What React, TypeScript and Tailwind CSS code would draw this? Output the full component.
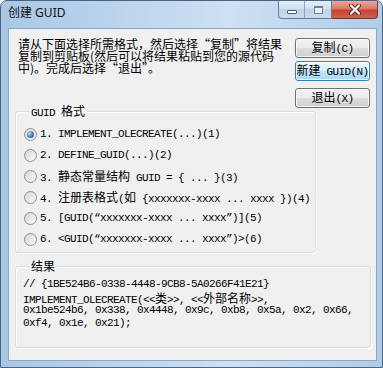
import type { ReactNode } from "react";

const CJK_ONLY = /([\u3000-\u9fff\uff00-\uffef]+)/;

// mixed line: ascii in a mono face, chinese runs at 12px
function T({ s }: { s: string }) {
  const parts = s.split(CJK_ONLY);
  return (
    <span className="whitespace-pre">
      {parts.map((p, i) =>
        i % 2 ? (
          <span key={i} className="text-[12px] tracking-normal font-['Noto_Sans_CJK_SC',sans-serif]">
            {p}
          </span>
        ) : (
          <span key={i}>{p}</span>
        )
      )}
    </span>
  );
}

function Btn({ children, def = false }: { children: ReactNode; def?: boolean }) {
  return (
    <div
      className={`h-[20px] w-[75px] rounded-[3px] border flex items-center justify-center whitespace-nowrap shadow-[inset_0_0_0_1px_rgba(255,255,255,0.75)] ${
        def
          ? "border-[#3c7fb1] bg-[linear-gradient(#eaf6fd,#d9f0fc_50%,#bee6fd_50%,#a7d9f5)]"
          : "border-[#707070] bg-[linear-gradient(#f2f2f2,#ebebeb_50%,#dddddd_50%,#cfcfcf)]"
      }`}
    >
      {children}
    </div>
  );
}

function Radio({ n, label, sel = false }: { n: number; label: string; sel?: boolean }) {
  return (
    <div className="h-[21px] flex items-center">
      <span className="w-[13px] h-[13px] rounded-full border border-[#8e8f8f] bg-[linear-gradient(135deg,#d4d4d4,#fbfbfb)] flex items-center justify-center shrink-0">
        {sel && (
          <span className="w-[7px] h-[7px] rounded-full bg-[radial-gradient(circle_at_35%_35%,#b9daf7,#2c6bb0_65%,#1d4f86)]" />
        )}
      </span>
      <span className="ml-[3px] whitespace-nowrap">
        <T s={`${n}. ${label}`} />
      </span>
    </div>
  );
}

const OPTIONS = [
  "IMPLEMENT_OLECREATE(...)(1)",
  "DEFINE_GUID(...)(2)",
  "静态常量结构 GUID = { ... }(3)",
  "注册表格式(如 {xxxxxxx-xxxx ... xxxx })(4)",
  "[GUID(“xxxxxxx-xxxx ... xxxx”)](5)",
  "<GUID(“xxxxxxx-xxxx ... xxxx”)>(6)",
];

const CODE = [
  "// {1BE524B6-0338-4448-9CB8-5A0266F41E21}",
  "IMPLEMENT_OLECREATE(<<类>>, <<外部名称>>,",
  "0x1be524b6, 0x338, 0x4448, 0x9c, 0xb8, 0x5a, 0x2, 0x66,",
  "0xf4, 0x1e, 0x21);",
];

export default function App() {
  return (
    <div className="w-[383px] h-[368px] flex flex-col border border-[#4a6482] rounded-t-[7px] overflow-hidden bg-[linear-gradient(90deg,#a9c7e5,#c4daf0_45%,#cfe1f3_60%,#b0cce8)] text-black font-['Liberation_Mono','Noto_Sans_CJK_SC',monospace] text-[11px] tracking-[-0.6px]">
      {/* title bar */}
      <div className="h-[27px] flex items-start shrink-0">
        <div className="pl-[7px] pt-[5px] text-[12px] tracking-normal leading-[14px] font-['Noto_Sans','Noto_Sans_CJK_SC',sans-serif] text-[#111]">
          创建 GUID
        </div>
        <div className="ml-auto mr-[4px] flex">
          <div className="flex h-[18px] border border-t-0 border-[#6a7c93] rounded-bl-[4px] overflow-hidden bg-[linear-gradient(#e4eef9,#cfdff0_50%,#bcd2ea_50%,#c9dcf0)]">
            <div className="w-[26px] flex items-center justify-center border-r border-[#8ea2ba]">
              <div className="w-[10px] h-[4px] mt-[5px] bg-white border border-[#4c5d73] rounded-[1px]" />
            </div>
            <div className="w-[26px] flex items-center justify-center">
              <div className="w-[9px] h-[8px] border border-[#6f819a] border-t-2 bg-[#e9f1fa]" />
            </div>
          </div>
          <div className="w-[46px] h-[18px] border border-t-0 border-l-0 border-[#6a3a35] rounded-br-[4px] bg-[linear-gradient(#eaa899,#d97a69_45%,#c8402e_55%,#d2624f)] flex items-center justify-center">
            <svg width="14" height="11" viewBox="0 0 14 11">
              <path d="M3 1.5 L11 9.5 M11 1.5 L3 9.5" stroke="#5a2a25" strokeWidth="4" strokeLinecap="round" />
              <path d="M3 1.5 L11 9.5 M11 1.5 L3 9.5" stroke="#fff" strokeWidth="2.2" strokeLinecap="round" />
            </svg>
          </div>
        </div>
      </div>

      {/* client area */}
      <div className="flex-1 ml-[7px] mr-[5px] mb-[6px] border border-[#8da7c2] bg-[#f0f0f0] pt-[9px] px-[6px] flex flex-col">
        <div className="h-[67px] flex">
          <div className="pl-[3px] text-[12px] tracking-normal font-['Noto_Sans_CJK_SC',sans-serif] whitespace-nowrap">
            <div className="h-[12px] leading-[12px]">请从下面选择所需格式，然后选择“复制”将结果</div>
            <div className="h-[12px] leading-[12px]">复制到剪贴板(然后可以将结果粘贴到您的源代码</div>
            <div className="h-[12px] leading-[12px]">中)。完成后选择“退出”。</div>
          </div>
          <div className="ml-auto flex flex-col">
            <Btn>
              <T s="复制(C)" />
            </Btn>
            <div className="mt-[3px]">
              <Btn def>
                <T s="新建 GUID(N)" />
              </Btn>
            </div>
            <div className="mt-[7px]">
              <Btn>
                <T s="退出(X)" />
              </Btn>
            </div>
          </div>
        </div>

        <fieldset className="w-[301px] border border-[#d5dfe5] rounded-[3px] shadow-[inset_1px_1px_0_#fff,1px_1px_0_#fff] pl-[8px] pt-[7px] pb-[2px]">
          <legend className="ml-[6px] px-[1px] h-[12px] leading-[12px]">
            <T s="GUID 格式" />
          </legend>
          {OPTIONS.map((o, i) => (
            <Radio key={i} n={i + 1} label={o} sel={i === 0} />
          ))}
        </fieldset>

        <fieldset className="mt-[7px] w-[356px] h-[88px] border border-[#d5dfe5] rounded-[3px] shadow-[inset_1px_1px_0_#fff,1px_1px_0_#fff] pl-[7px] pt-[6px]">
          <legend className="ml-[7px] px-[1px] h-[12px] leading-[12px]">
            <T s="结果" />
          </legend>
          {CODE.map((c, i) => (
            <div key={i} className="h-[13px] leading-[13px] whitespace-nowrap">
              <T s={c} />
            </div>
          ))}
        </fieldset>
      </div>
    </div>
  );
}
